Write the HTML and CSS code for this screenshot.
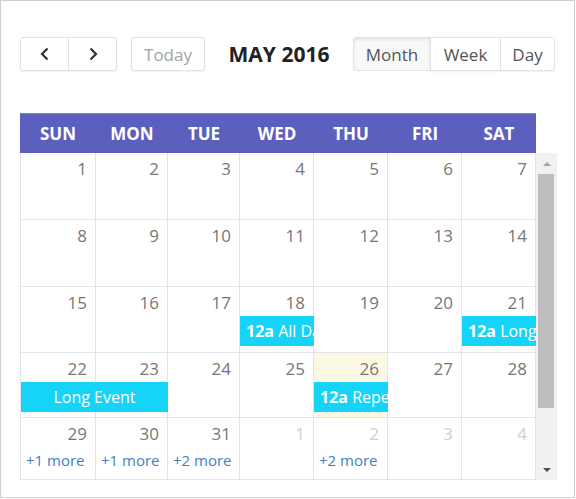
FILE: index.html
```html
<!DOCTYPE html>
<html>
<head>
<meta charset="utf-8">
<link rel="stylesheet" href="styles.css">
</head>
<body>
<div class="frame">
  <div class="toolbar">
    <div class="left">
      <div class="group">
        <button class="btn nav"><svg width="12" height="16" viewBox="0 0 12 16"><polyline points="8.5,2.5 3,8 8.5,13.5" fill="none" stroke="#333" stroke-width="2.2"/></svg></button>
        <button class="btn nav"><svg width="12" height="16" viewBox="0 0 12 16"><polyline points="3.5,2.5 9,8 3.5,13.5" fill="none" stroke="#333" stroke-width="2.2"/></svg></button>
      </div>
      <button class="btn today">Today</button>
    </div>
    <h2 class="title">MAY 2016</h2>
    <div class="group">
      <button class="btn view v-month active">Month</button>
      <button class="btn view v-week">Week</button>
      <button class="btn view v-day">Day</button>
    </div>
  </div>

  <div class="cal">
    <div class="head">
      <div>SUN</div><div>MON</div><div>TUE</div><div>WED</div><div>THU</div><div>FRI</div><div>SAT</div>
    </div>
    <div class="bodywrap">
      <div class="weeks">
        <div class="wk">
          <div class="day c1"><span class="num">1</span></div>
          <div class="day c2"><span class="num">2</span></div>
          <div class="day c3"><span class="num">3</span></div>
          <div class="day c4"><span class="num">4</span></div>
          <div class="day c5"><span class="num">5</span></div>
          <div class="day c6"><span class="num">6</span></div>
          <div class="day c7"><span class="num">7</span></div>
        </div>
        <div class="wk">
          <div class="day c1"><span class="num">8</span></div>
          <div class="day c2"><span class="num">9</span></div>
          <div class="day c3"><span class="num">10</span></div>
          <div class="day c4"><span class="num">11</span></div>
          <div class="day c5"><span class="num">12</span></div>
          <div class="day c6"><span class="num">13</span></div>
          <div class="day c7"><span class="num">14</span></div>
        </div>
        <div class="wk">
          <div class="day c1"><span class="num">15</span></div>
          <div class="day c2"><span class="num">16</span></div>
          <div class="day c3"><span class="num">17</span></div>
          <div class="day c4"><span class="num">18</span></div>
          <div class="day c5"><span class="num">19</span></div>
          <div class="day c6"><span class="num">20</span></div>
          <div class="day c7"><span class="num">21</span></div>
          <div class="ev c4"><b>12a</b> All Day Event</div>
          <div class="ev c7"><b>12a</b> Long Event</div>
        </div>
        <div class="wk">
          <div class="day c1"><span class="num">22</span></div>
          <div class="day c2"><span class="num">23</span></div>
          <div class="day c3"><span class="num">24</span></div>
          <div class="day c4"><span class="num">25</span></div>
          <div class="day c5 today-cell"><span class="num">26</span></div>
          <div class="day c6"><span class="num">27</span></div>
          <div class="day c7"><span class="num">28</span></div>
          <div class="ev span2 center">Long Event</div>
          <div class="ev c5"><b>12a</b> Repeating Event</div>
        </div>
        <div class="wk">
          <div class="day c1"><span class="num">29</span></div>
          <div class="day c2"><span class="num">30</span></div>
          <div class="day c3"><span class="num">31</span></div>
          <div class="day c4 other"><span class="num">1</span></div>
          <div class="day c5 other"><span class="num">2</span></div>
          <div class="day c6 other"><span class="num">3</span></div>
          <div class="day c7 other"><span class="num">4</span></div>
          <a class="more c1">+1 more</a>
          <a class="more c2">+1 more</a>
          <a class="more c3">+2 more</a>
          <a class="more c5">+2 more</a>
        </div>
      </div>
      <div class="scrollbar">
        <div class="arrow up"></div>
        <div class="track"><div class="thumb"></div></div>
        <div class="arrow down"></div>
      </div>
    </div>
  </div>
</div>
</body>
</html>
```

FILE: styles.css
```css
* { box-sizing: border-box; }
html, body { margin: 0; padding: 0; background: #fff; }
body { font-family: "Open Sans", "Liberation Sans", sans-serif; }

.frame {
  width: 575px;
  height: 498px;
  border: 1px solid #cfcfcf;
  padding: 36px 0 0 19px;
  overflow: hidden;
}

.toolbar {
  width: 535px;
  height: 34px;
  display: flex;
  align-items: center;
  justify-content: space-between;
}
.left { display: flex; align-items: center; gap: 14px; }
.group { display: flex; }

.btn {
  height: 34px;
  margin: 0;
  padding: 0;
  border: 1px solid #e3e3e3;
  background: #fff;
  font-family: inherit;
  font-size: 17px;
  color: #555;
  box-shadow: 0 1px 2px rgba(0,0,0,0.06);
  display: flex;
  align-items: center;
  justify-content: center;
  border-radius: 0;
}
.group .btn + .btn { border-left: 1px solid #e3e3e3; margin-left: -1px; }
.group .btn:first-child { border-radius: 3px 0 0 3px; }
.group .btn:last-child { border-radius: 0 3px 3px 0; }
.nav { width: 49px; }
.today { width: 74px; border-radius: 3px; color: #a3a3a3; }
.v-month { width: 78px; }
.v-week { width: 71px; }
.v-day { width: 55px; }
.active {
  background: #f8f8f8;
  box-shadow: inset 0 2px 3px rgba(0,0,0,0.08);
}

.title {
  margin: 0;
  font-size: 21px;
  font-weight: 700;
  color: #222;
  width: 104px;
  text-align: center;
  white-space: nowrap;
}

.cal { margin-top: 42px; width: 537px; }
.head {
  width: 516px;
  height: 40px;
  background: #5d5fbf;
  border-top: 1px solid #7b7dd0;
  display: grid;
  grid-template-columns: 76px 72px 72px 74px 74px 74px 74px;
  align-items: center;
  color: #fff;
  font-weight: 700;
  font-size: 17px;
  text-align: center;
}

.bodywrap { display: flex; height: 327px; }
.weeks {
  width: 516px;
  border-left: 1px solid #e1e4e8;
  display: grid;
  grid-template-rows: 67px 67px 66px 65px 62px;
}
.wk {
  display: grid;
  grid-template-columns: 75px 72px 72px 74px 74px 74px 74px;
  grid-template-rows: 29px 30px 1fr;
  border-bottom: 1px solid #e1e4e8;
}
.day {
  grid-row: 1 / -1;
  border-right: 1px solid #e1e4e8;
  text-align: right;
  padding: 4px 8px 0 0;
}
.num { font-size: 17px; line-height: 24px; color: #777; }
.other .num { color: #cfcfcf; }
.today-cell { background: #fcf8e3; }

.c1 { grid-column: 1; }
.c2 { grid-column: 2; }
.c3 { grid-column: 3; }
.c4 { grid-column: 4; }
.c5 { grid-column: 5; }
.c6 { grid-column: 6; }
.c7 { grid-column: 7; }
.span2 { grid-column: 1 / span 2; }

.ev {
  grid-row: 2;
  background: #16d3f8;
  color: #fff;
  font-size: 16px;
  line-height: 30px;
  padding-left: 6px;
  white-space: nowrap;
  overflow: hidden;
}
.ev b { font-weight: 700; }
.ev.center { text-align: center; padding-left: 0; }

.more {
  grid-row: 2;
  color: #3f7fc3;
  font-size: 15px;
  line-height: 26px;
  padding-left: 5px;
  white-space: nowrap;
}

.scrollbar {
  width: 21px;
  height: 327px;
  background: #f1f1f1;
  display: flex;
  flex-direction: column;
}
.arrow { height: 21px; display: flex; align-items: center; justify-content: center; }
.arrow::before {
  content: "";
  width: 0; height: 0;
  border-left: 4px solid transparent;
  border-right: 4px solid transparent;
}
.arrow.up::before { border-bottom: 4px solid #a3a3a3; }
.arrow.down::before { border-top: 4px solid #505050; }
.track { flex: 1; padding: 0 3px 0 2px; }
.thumb { height: 234px; background: #bebebe; }
```
